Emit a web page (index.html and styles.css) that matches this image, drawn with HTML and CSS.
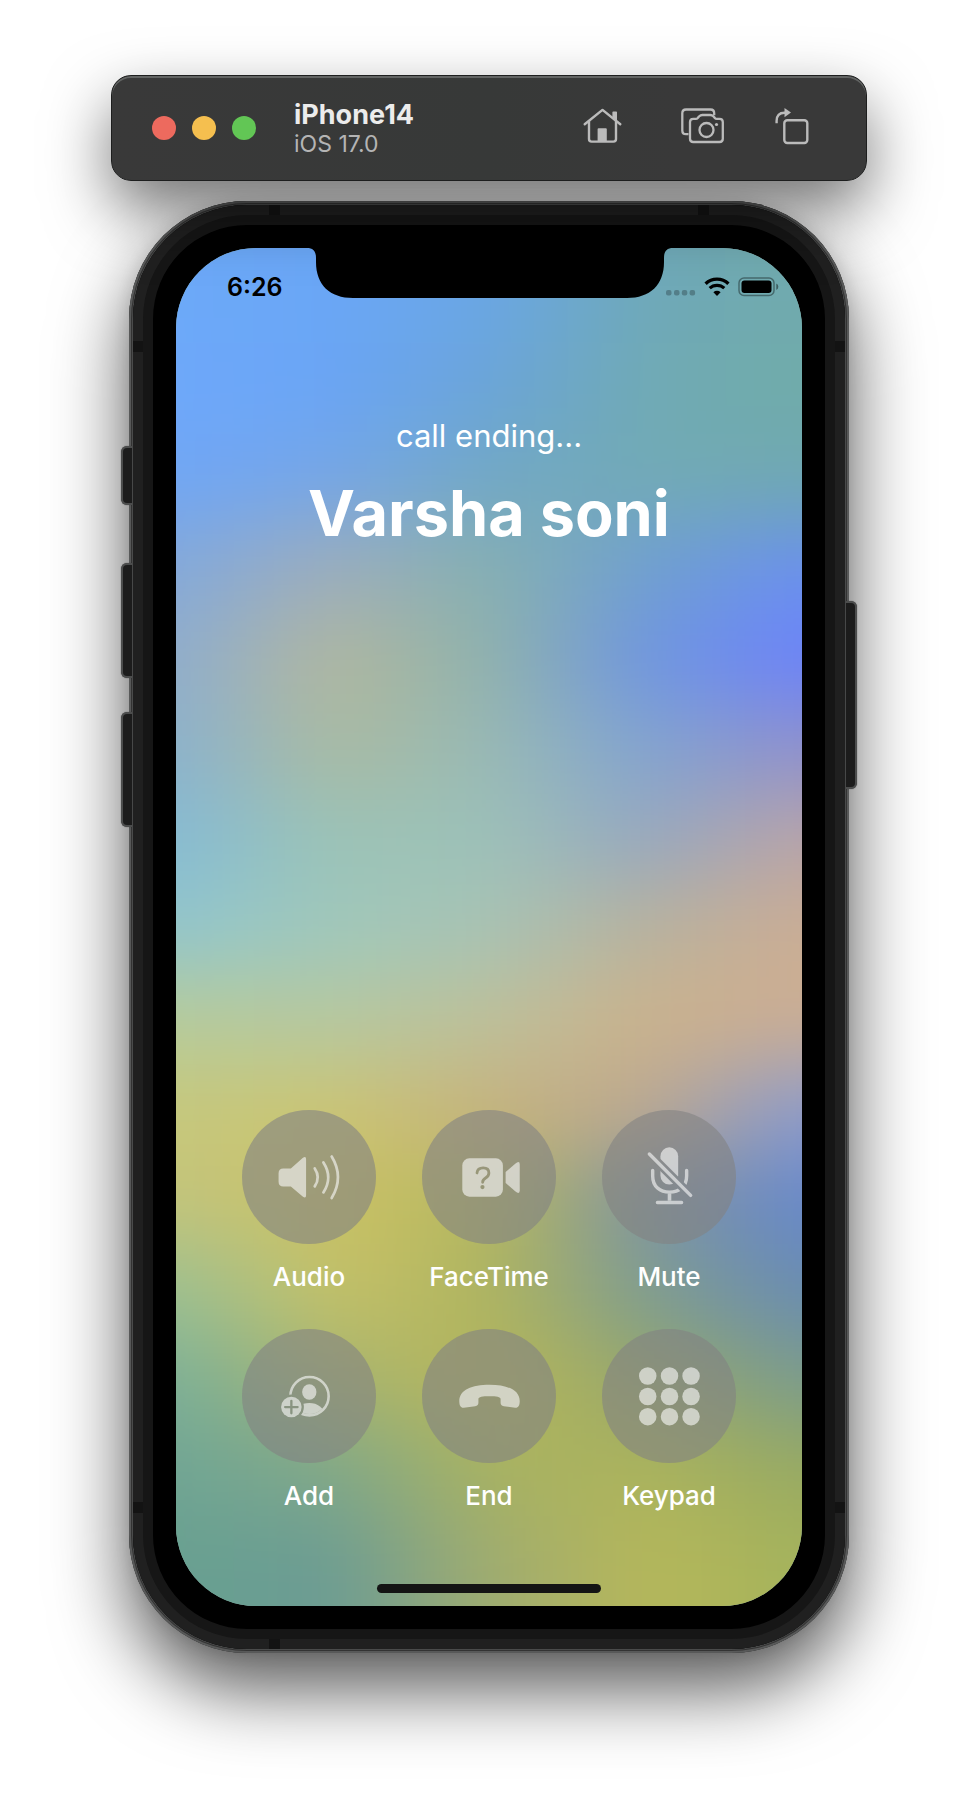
FILE: index.html
```html
<!DOCTYPE html>
<html lang="en">
<head>
<meta charset="utf-8">
<meta name="viewport" content="width=device-width, initial-scale=1">
<title>iPhone14</title>
<link rel="stylesheet" href="styles.css">
</head>
<body>
<main class="simulator">
  <header class="toolbar">
    <div class="lights">
      <button class="light light-close" aria-label="Close"></button>
      <button class="light light-minimize" aria-label="Minimize"></button>
      <button class="light light-zoom" aria-label="Zoom"></button>
    </div>
    <div class="device">
      <h1 class="device-name">iPhone14</h1>
      <p class="device-os">iOS 17.0</p>
    </div>
    <div class="tools">
      <button class="tool tool-home" aria-label="Home">
        <svg width="40" height="36" viewBox="0 0 40 36" fill="none" stroke="currentColor" stroke-width="2.4" stroke-linecap="round" stroke-linejoin="round"><path d="M1.7 16.3 19.5 1.9 37.3 16.3"/><path d="M6 13.500V31q0 2.600 2.600 2.600h21.800q2.600 0 2.600-2.600V13.500"/><path d="M30.200 10V4.200h3V13" fill="currentColor" stroke-width="1.600"/><path d="M15.600 33V21.200h7.200V33z" fill="currentColor" stroke-width="2"/></svg>
      </button>
      <button class="tool" aria-label="Screenshot">
        <svg width="44" height="36" viewBox="0 0 44 36" fill="none" stroke="currentColor" stroke-width="2.300" stroke-linecap="round" stroke-linejoin="round"><path d="M7.500 26.200H5q-3.700 0-3.700-3.700V5.200Q1.300 1.500 5 1.500h24.500q3.700 0 3.700 3.700v2" stroke-linecap="butt"/><path d="M12.300 10.800h2.500q1.200 0 2-.900l1.500-1.600q1.200-1.300 3-1.300h8q1.800 0 3 1.300l1.500 1.600q.8.900 2 .900h2.700q3.300 0 3.300 3.300v16.600q0 3.300-3.300 3.300H12.300Q9 34 9 30.700V14.100q0-3.300 3.300-3.300z"/><circle cx="25.500" cy="22" r="7"/><circle cx="35.500" cy="16.500" r="1.600" fill="currentColor" stroke="none"/></svg>
      </button>
      <button class="tool" aria-label="Rotate">
        <svg width="34" height="37" viewBox="0 0 34 37" fill="none" stroke="currentColor" stroke-width="2.400"><rect x="9.300" y="12.300" width="23" height="22.700" rx="3"/><path d="M1.600 15.200v-2.400Q1.600 4.700 9.500 4.700h1"/><path d="M9.500 0 16 4.600 9.500 9.200z" fill="currentColor" stroke="none"/></svg>
      </button>
    </div>
  </header>

  <section class="phone" aria-label="Phone">
    <span class="key key-silent"></span>
    <span class="key key-up"></span>
    <span class="key key-down"></span>
    <span class="key key-power"></span>
    <span class="band band-h band-top band-left"></span>
    <span class="band band-h band-top band-right"></span>
    <span class="band band-h band-bottom band-left"></span>
    <span class="band band-v band-west band-upper"></span>
    <span class="band band-v band-east band-upper"></span>
    <span class="band band-v band-west band-lower"></span>
    <span class="band band-v band-east band-lower"></span>

    <div class="bezel">
      <div class="screen">
        <svg class="notch" width="366" height="50" viewBox="0 0 366 50"><path d="M0 0C6 0 9 3 9 10v4C9 37 23 50 46 50H320C343 50 357 37 357 14V10C357 3 360 0 366 0Z"/></svg>

        <div class="status">
          <time class="clock">6:26</time>
          <div class="status-icons">
            <svg width="30" height="20" viewBox="0 0 30 20" fill="#000" fill-opacity=".25"><rect x="0" y="13" width="5.500" height="5.500" rx="2"/><rect x="8" y="13" width="5.500" height="5.500" rx="2"/><rect x="15.800" y="13" width="5.500" height="5.500" rx="2"/><rect x="23.600" y="13" width="5.500" height="5.500" rx="2"/></svg>
            <svg width="26" height="20" viewBox="0 0 26 20" fill="none" stroke="#000"><path d="M1.600 6.700a16.600 16.600 0 0 1 22.800 0" stroke-width="3.400"/><path d="M5.700 11.200a10.600 10.600 0 0 1 14.600 0" stroke-width="3.200"/><path d="M13 19 9.400 15.200a5.200 5.200 0 0 1 7.200 0z" fill="#000" stroke="none"/></svg>
            <svg width="41" height="20" viewBox="0 0 41 20"><rect x="1" y="1" width="35" height="17.500" rx="5" fill="none" stroke="#000" stroke-opacity=".38" stroke-width="1.500"/><rect x="3.500" y="3.500" width="30" height="12.500" rx="3" fill="#000"/><path d="M38.300 6.500q2 1 2 3.300t-2 3.300z" fill="#000" fill-opacity=".45"/></svg>
          </div>
        </div>

        <div class="caller">
          <p class="call-state">call ending...</p>
          <h2 class="caller-name">Varsha soni</h2>
        </div>

        <div class="controls">
          <button class="control">
            <span class="disc"><svg viewBox="0 0 133 133"><path fill="currentColor" d="M41 58h7.500L60.200 47.700q3.400-2.600 3.400 1.300v35.600q0 3.900-3.400 1.300L48.500 76H41q-4.700 0-4.700-4.700v-8.600Q36.300 58 41 58z"/><path fill="none" stroke="currentColor" stroke-width="2.700" stroke-linecap="round" d="M72.200 58q6 8.900 0 17.800M80.800 52q9.600 14.900 0 29.800M89 46.200q12.500 20.500 0 41.200"/></svg></span>
            <span class="caption">Audio</span>
          </button>
          <button class="control">
            <span class="disc"><svg viewBox="0 0 133 133"><mask id="query"><rect width="133" height="133" fill="#fff"/><path d="M54.600 62.500q.5-5 6.100-5 5.700 0 5.700 5 0 3-3.300 5-2.900 1.700-2.900 4.200" fill="none" stroke="#000" stroke-width="2.800" stroke-linecap="round"/><circle cx="60" cy="76.500" r="2.100" fill="#000"/></mask><rect x="40" y="48" width="40.300" height="38" rx="7" fill="currentColor" mask="url(#query)"/><path fill="currentColor" d="M83 61.500 92.500 53.300q4.500-3.500 4.500.7v26q0 4.200-4.500.7L83 72.500z"/></svg></span>
            <span class="caption">FaceTime</span>
          </button>
          <button class="control">
            <span class="disc"><svg viewBox="0 0 133 133"><mask id="slash"><rect width="133" height="133" fill="#fff"/><path d="M43 39.700 94 90.700" stroke="#000" stroke-width="8.500"/></mask><g mask="url(#slash)"><rect x="58" y="37" width="17.600" height="37" rx="8.800" fill="currentColor"/><path d="M50.300 60v5.500C50.300 76 57.500 81.500 67 81.500S84 76 84 65.500V60" fill="none" stroke="currentColor" stroke-width="3.400" stroke-linecap="round"/></g><path d="M67 83v7" stroke="currentColor" stroke-width="3.600"/><path d="M55 91.800h24M47 43.700l41 41" stroke="currentColor" stroke-width="3.400" stroke-linecap="round"/></svg></span>
            <span class="caption">Mute</span>
          </button>
          <button class="control">
            <span class="disc"><svg viewBox="0 0 133 133"><clipPath id="portrait"><circle cx="67" cy="66.700" r="17.700"/></clipPath><mask id="badge"><rect width="133" height="133" fill="#fff"/><circle cx="49" cy="77.500" r="12.400" fill="#000"/></mask><mask id="plus"><rect width="133" height="133" fill="#fff"/><path d="M42.800 77.500h12.400M49 71.300v12.400" stroke="#000" stroke-width="2.300" stroke-linecap="round"/></mask><g mask="url(#badge)"><circle cx="67" cy="66.700" r="19" fill="none" stroke="currentColor" stroke-width="2.600"/><ellipse cx="66.800" cy="62.500" rx="7.100" ry="7.700" fill="currentColor"/><ellipse cx="66.800" cy="85" rx="15" ry="11.500" fill="currentColor" clip-path="url(#portrait)"/></g><circle cx="49" cy="77.500" r="10.200" fill="currentColor" mask="url(#plus)"/></svg></span>
            <span class="caption">Add</span>
          </button>
          <button class="control">
            <span class="disc"><svg viewBox="0 0 133 133"><path fill="currentColor" d="M37 71.500C37 60.500 49.500 55.300 67 55.300S97 60.500 97 71.500c0 4.800-1.500 7-4.500 6.700l-11.300-1.500c-2.300-.3-3.200-1.400-3.200-3.700v-3.400C78 67.300 74 66.800 67 66.800s-11 .5-11 2.800V73c0 2.300-.9 3.400-3.200 3.700l-11.300 1.500c-3 .3-4.500-1.900-4.500-6.700z"/></svg></span>
            <span class="caption">End</span>
          </button>
          <button class="control">
            <span class="disc"><svg viewBox="0 0 133 133" fill="currentColor"><circle cx="45.400" cy="46.600" r="8.700"/><circle cx="67" cy="46.600" r="8.700"/><circle cx="88.400" cy="46.600" r="8.700"/><circle cx="45.400" cy="67" r="8.700"/><circle cx="67" cy="67" r="8.700"/><circle cx="88.400" cy="67" r="8.700"/><circle cx="45.400" cy="87" r="8.700"/><circle cx="67" cy="87" r="8.700"/><circle cx="88.400" cy="87" r="8.700"/></svg></span>
            <span class="caption">Keypad</span>
          </button>
        </div>

        <div class="home-bar"></div>
      </div>
    </div>
  </section>
</main>
</body>
</html>
```

FILE: styles.css
```css
* {
  box-sizing: border-box;
}

body {
  margin: 0;
  background: #fff;
  font-family: Inter, "Liberation Sans", sans-serif;
}

h1, h2, p {
  margin: 0;
}

button {
  padding: 0;
  border: 0;
  background: none;
  color: inherit;
  font: inherit;
}

svg {
  display: block;
}

.simulator {
  max-width: 980px;
  margin: 0 auto;
  padding: 75px 111px 149px;
}

/* Window toolbar */

.toolbar {
  position: relative;
  z-index: 1;
  display: flex;
  align-items: center;
  padding: 20px 57px 20px 40px;
  border: 1px solid #1d1e1e;
  border-radius: 20px;
  background: linear-gradient(90deg, #393939, #373938 50%, #393939 75%);
  box-shadow: inset 0 2px 0 #626463, 0 28px 64px rgba(0, 0, 0, .54);
}

.lights {
  display: flex;
  gap: 16px;
}

.light {
  width: 24px;
  height: 24px;
  border-radius: 50%;
}

.light-close { background: #ed6a5e; }
.light-minimize { background: #f5bf4f; }
.light-zoom { background: #62c655; }

.device {
  margin-left: 38px;
  padding: 2px 0 4px;
}

.device-name {
  color: #ececec;
  font-size: 27px;
  font-weight: 700;
  line-height: 34px;
}

.device-os {
  color: #b4b4b4;
  font-size: 23px;
  line-height: 24px;
}

.tools {
  display: flex;
  align-items: center;
  gap: 50px;
  margin-left: auto;
  padding-bottom: 4px;
  color: #bbb;
}

.tool-home {
  margin-right: 8px;
}

/* Device body */

.phone {
  position: relative;
  margin: 20px 18px 0;
  padding: 4px;
  border-radius: 118px;
  background: #4a4b4b;
  box-shadow: inset 0 0 0 2px #585959, inset 0 0 0 3px #333, 0 36px 76px rgba(0, 0, 0, .66), 0 0 16px rgba(0, 0, 0, .1);
}

.bezel {
  padding: 43px;
  border-radius: 114px;
  background: #000;
  box-shadow: inset 0 0 0 10px #202020, inset 0 0 0 20px #161616;
}

.key {
  position: absolute;
  width: 11px;
  border: 2px solid #4c4d4d;
  background: #1c1c1c;
  box-shadow: 0 0 1px #333;
}

.key-silent,
.key-up,
.key-down {
  left: -8px;
  border-right: 0;
  border-radius: 6px 0 0 6px;
}

.key-silent { top: 245px; height: 59px; }
.key-up { top: 362px; height: 115px; }
.key-down { top: 511px; height: 115px; }

.key-power {
  top: 400px;
  right: -8px;
  height: 188px;
  border-left: 0;
  border-radius: 0 6px 6px 0;
}

.band {
  position: absolute;
  background: #131313;
}

.band-h { width: 11px; height: 10px; }
.band-v { width: 10px; height: 11px; }
.band-top { top: 4px; }
.band-bottom { bottom: 4px; }
.band-left { left: 140px; }
.band-right { right: 140px; }
.band-west { left: 4px; }
.band-east { right: 4px; }
.band-upper { top: 140px; }
.band-lower { bottom: 140px; }

/* Screen */

.screen {
  position: relative;
  display: flex;
  flex-direction: column;
  aspect-ratio: 626 / 1358;
  overflow: hidden;
  border-radius: 80px;
  background: #8ab0a8;
  color: #fff;
}

/* Wallpaper: horizontal colour strips melted together by a blur. It spills
   over the screen's edges, and the two last layers fill the spill. */

.screen::before {
  content: "";
  position: absolute;
  inset: -100px;
  padding: 100px 0;
  filter: blur(38px);
  background-origin: content-box, content-box, content-box, content-box, content-box, content-box, content-box, content-box, content-box, content-box, content-box, content-box, content-box, content-box, content-box, border-box, border-box;
  background-repeat: no-repeat;
  background-image:
    linear-gradient(90deg, #6ca9f8 12%, #6aa6f6, #6aa6e4, #6fa9b8, #70aaad 88%),
    linear-gradient(90deg, #6ea8fb 12%, #6aa5f5, #6ba5d8, #70aab4, #70aba9 88%),
    linear-gradient(90deg, #70a6f5 12%, #76a6e6, #72a8c4, #72aab6, #70a9b2 88%),
    linear-gradient(90deg, #84a9da 12%, #9dadbc, #86b0b0, #70a0d0, #6a90ee 88%),
    linear-gradient(90deg, #90adcc 12%, #b2b79e, #8fb2ac, #6f96e0, #6c82fa 88%),
    linear-gradient(90deg, #8cb2cc 12%, #aabba2, #98b9b4, #82a4d0, #9090cc 88%),
    linear-gradient(90deg, #86bbd4 12%, #9bc3b6, #9dc1b8, #97a8bf, #b9a4a8 88%),
    linear-gradient(90deg, #92c6cc 12%, #a0c8bb, #a8c3b4, #b8b29e, #cbad94 88%),
    linear-gradient(90deg, #b6cb9c 12%, #b6c8a0, #bdc09a, #cbb28c, #cbad94 88%),
    linear-gradient(90deg, #c6c87c 12%, #cbc574, #c6b27e, #bca890, #8d9bcc 88%),
    linear-gradient(90deg, #c3c47c 12%, #cac164, #b5b860, #8094a0, #6688cc 88%),
    linear-gradient(90deg, #9cc092 12%, #c5c168, #aeb45f, #7f9d90, #6a8cb2 88%),
    linear-gradient(90deg, #7cb098 12%, #a8b470, #b6b65a, #98a86a, #7b9c8c 88%),
    linear-gradient(90deg, #70a594 12%, #80a88a, #a8b262, #acb45c, #98aa62 88%),
    linear-gradient(90deg, #68a090 12%, #6c9c94, #a0ac70, #b6b75a, #a4b35c 88%),
    linear-gradient(90deg, #6ca9f8 12%, #6aa6f6, #6aa6e4, #6fa9b8, #70aaad 88%),
    linear-gradient(90deg, #68a090 12%, #6c9c94, #a0ac70, #b6b75a, #a4b35c 88%);
  background-size: 100% 7%, 100% 7%, 100% 7%, 100% 7%, 100% 7%, 100% 7%, 100% 7%, 100% 7%, 100% 7%, 100% 7%, 100% 7%, 100% 7%, 100% 7%, 100% 7%, 100% 7%, 100% 50%, 100% 50%;
  background-position: 0 0, 0 7.14%, 0 14.29%, 0 21.43%, 0 28.57%, 0 35.71%, 0 42.86%, 0 50%, 0 57.14%, 0 64.29%, 0 71.43%, 0 78.57%, 0 85.71%, 0 92.86%, 0 100%, 0 0, 0 100%;
}

.screen > * {
  position: relative;
}

.screen > .notch {
  position: absolute;
  top: 0;
  left: 50%;
  margin-left: -182px;
}

.status {
  display: flex;
  align-items: center;
  justify-content: space-between;
  padding: 24px 23px 0 51px;
  color: #000;
}

.clock {
  font-size: 25px;
  font-weight: 600;
  line-height: 30px;
}

.status-icons {
  display: flex;
  gap: 8px;
}

.caller {
  margin-top: 112px;
  text-align: center;
}

.call-state {
  font-size: 31px;
  font-weight: 400;
  line-height: 44px;
}

.caller-name {
  margin-top: 15px;
  font-size: 63px;
  font-weight: 700;
  line-height: 80px;
}

.controls {
  display: grid;
  grid-template-columns: repeat(3, 134px);
  justify-content: center;
  gap: 36px 46px;
  margin-top: auto;
}

.control {
  display: flex;
  flex-direction: column;
  align-items: center;
  gap: 17px;
}

.disc {
  width: 134px;
  height: 134px;
  border-radius: 50%;
  background: rgba(130, 130, 130, .6);
  color: rgba(255, 255, 255, .58);
}

.caption {
  font-size: 26px;
  font-weight: 500;
  line-height: 32px;
}

.home-bar {
  align-self: center;
  width: 224px;
  height: 9px;
  margin: 72px 0 13px;
  border-radius: 5px;
  background: #141414;
}
```
